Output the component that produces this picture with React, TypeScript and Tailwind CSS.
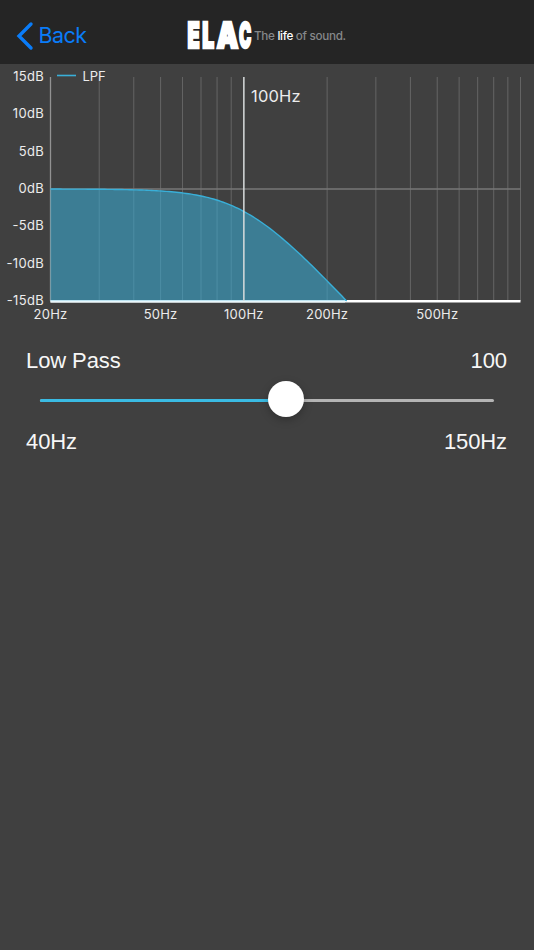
import React from "react";

const PLOT = { left: 50.5, right: 520.5, top: 13, bottom: 237 };
const GRID = [30, 40, 50, 60, 70, 80, 90, 200, 300, 400, 500, 600, 700, 800, 900, 1000];
const LEVELS = [15, 10, 5, 0, -5, -10, -15];
const FREQUENCIES = [20, 50, 100, 200, 500];
const CUTOFF = 100;

const LOGO = [
  { letter: "E", x: 187.6, scale: 0.56 },
  { letter: "L", x: 202.2, scale: 0.59 },
  { letter: "A", x: 216.8, scale: 0.76 },
  { letter: "C", x: 239, scale: 0.46 },
];

const xOf = (hz: number) =>
  PLOT.left + (Math.log10(hz / 20) / Math.log10(1000 / 20)) * (PLOT.right - PLOT.left);
const yOf = (db: number) => PLOT.top + ((15 - db) / 30) * (PLOT.bottom - PLOT.top);

// second order Butterworth low pass, clipped where it leaves the plot
function responseCurve() {
  const points: string[] = [];
  const end = CUTOFF * Math.pow(Math.pow(10, 1.5) - 1, 0.25);
  for (let i = 0; i <= 120; i++) {
    const hz = 20 * Math.pow(end / 20, i / 120);
    const db = -10 * Math.log10(1 + Math.pow(hz / CUTOFF, 4));
    points.push(`${xOf(hz).toFixed(2)},${yOf(db).toFixed(2)}`);
  }
  return points.join(" L");
}

function Header() {
  return (
    <header className="h-16 bg-[#252525]">
      <svg width="534" height="64" className="block">
        <path d="M31 24 L19 36 L31 48" fill="none" stroke="#0a7cf8" strokeWidth="3.4" strokeLinecap="round" />
        <text x="38.5" y="43" fill="#0a7cf8" fontSize="21.5" textLength="48.5" fontFamily="Inter, sans-serif">
          Back
        </text>
        <g fill="#fff" stroke="#fff" strokeWidth="2.6" fontFamily="Inter, sans-serif" fontWeight="900" fontSize="35.5">
          {LOGO.map((l) => (
            <text key={l.letter} transform={`translate(${l.x} 48.4) scale(${l.scale} 1)`}>
              {l.letter}
            </text>
          ))}
        </g>
        <text x="254" y="40" fill="#85888a" fontSize="11.7" fontWeight="500" textLength="92" fontFamily="Inter, sans-serif">
          The <tspan fill="#fff">life</tspan> of sound.
        </text>
      </svg>
    </header>
  );
}

function Chart() {
  const curve = responseCurve();
  return (
    <svg width="534" height="266" className="block" fontFamily="Inter, sans-serif" fontSize="13" fill="#ececec">
      {GRID.map((hz) => (
        <line key={hz} x1={xOf(hz)} x2={xOf(hz)} y1={PLOT.top} y2={PLOT.bottom} stroke="#646464" />
      ))}
      <line x1={PLOT.left} x2={PLOT.right} y1="125" y2="125" stroke="#777" strokeWidth="1.6" />
      <line x1={PLOT.left} x2={PLOT.left} y1={PLOT.top} y2={PLOT.bottom} stroke="#929292" strokeWidth="1.3" />
      <line x1={PLOT.left} x2={PLOT.right} y1="237.2" y2="237.2" stroke="#fff" strokeWidth="2.6" />
      <path d={`M${curve} L${PLOT.left},${PLOT.bottom} Z`} fill="#39afd8" fillOpacity="0.55" />
      <path d={`M${curve}`} fill="none" stroke="#39afd8" strokeWidth="1.4" />
      <line x1={PLOT.left} x2="345" y1="237.6" y2="237.6" stroke="#e8f7fc" strokeWidth="2" />
      <line x1={xOf(CUTOFF)} x2={xOf(CUTOFF)} y1={PLOT.top} y2={PLOT.bottom} stroke="#d8dcdd" strokeWidth="1.5" />

      {LEVELS.map((db) => (
        <text key={db} x="44" y={yOf(db) + 4} textAnchor="end" letterSpacing="0.3">
          {db}dB
        </text>
      ))}
      {FREQUENCIES.map((hz) => (
        <text key={hz} x={xOf(hz)} y="255" textAnchor="middle" letterSpacing="0.2">
          {hz}Hz
        </text>
      ))}
      <line x1="57" x2="76" y1="11.5" y2="11.5" stroke="#39afd8" strokeWidth="1.6" />
      <text x="82.5" y="16.5">LPF</text>
      <text x="251" y="38" fontSize="16.5" textLength="49.5">
        {CUTOFF}Hz
      </text>
    </svg>
  );
}

function Slider() {
  return (
    <div className="relative mx-10 h-[3px] rounded-full bg-[#b4b4b4]">
      <div className="h-full w-[246px] rounded-full bg-[#3abbe3]" />
      <div className="absolute -top-[18px] left-[227.5px] size-9 rounded-full bg-white shadow-[0_3px_8px_rgba(0,0,0,0.25)]" />
    </div>
  );
}

export default function App() {
  return (
    <div className="h-[950px] w-[534px] overflow-hidden bg-[#404040] font-['Liberation_Sans',sans-serif] text-[22px] leading-[26px] tracking-[-0.1px] text-[#f7f7f7]">
      <Header />
      <Chart />
      <div className="flex justify-between pt-[18px] pr-[27px] pb-[25px] pl-[26px]">
        <span>Low Pass</span>
        <span>{CUTOFF}</span>
      </div>
      <Slider />
      <div className="flex justify-between pt-[27px] pr-[27px] pl-[26px]">
        <span>40Hz</span>
        <span>150Hz</span>
      </div>
    </div>
  );
}
